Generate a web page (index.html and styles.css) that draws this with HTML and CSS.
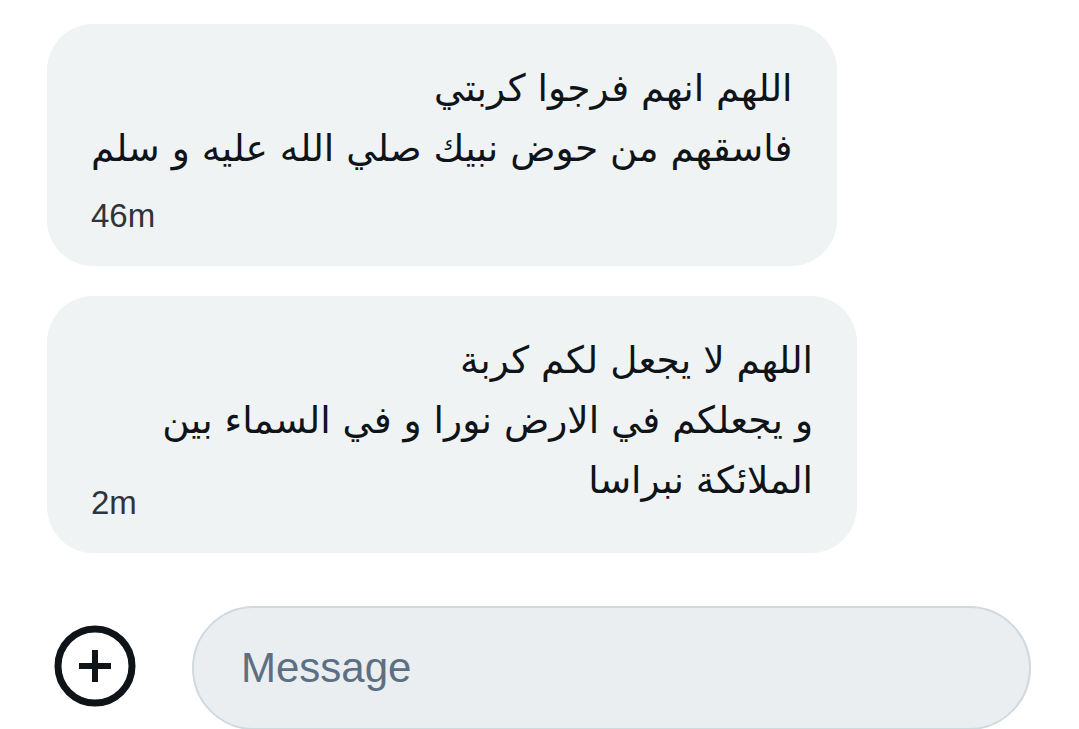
FILE: index.html
```html
<!DOCTYPE html>
<html lang="ar">
<head>
<meta charset="utf-8">
<title>Messages</title>
<link rel="stylesheet" href="styles.css">
</head>
<body>
<main class="chat">
  <section class="thread">
    <div class="bubble">
      <p class="bubble__text" dir="rtl">اللهم انهم فرجوا كربتي<br>فاسقهم من حوض نبيك صلي الله عليه و سلم</p>
      <div class="bubble__time">46m</div>
    </div>
    <div class="bubble">
      <p class="bubble__text" dir="rtl">اللهم لا يجعل لكم كربة<br>و يجعلكم في الارض نورا و في السماء بين الملائكة نبراسا</p>
      <div class="bubble__time bubble__time--overlap">2m</div>
    </div>
  </section>
  <footer class="composer">
    <button class="composer__add" aria-label="Add">
      <svg viewBox="0 0 82 82" width="82" height="82" aria-hidden="true">
        <circle cx="41" cy="41" r="37" fill="none" stroke="#0f1419" stroke-width="7"/>
        <rect x="25" y="38" width="32" height="6" fill="#0f1419"/>
        <rect x="38" y="25" width="6" height="32" fill="#0f1419"/>
      </svg>
    </button>
    <div class="composer__input">Message</div>
  </footer>
</main>
</body>
</html>
```

FILE: styles.css
```css
html, body {
  margin: 0;
  padding: 0;
  background: #ffffff;
}

body {
  width: 1079px;
  height: 729px;
  overflow: hidden;
  font-family: "DejaVu Sans", "Liberation Sans", sans-serif;
  color: #0f1419;
}

.chat {
  display: flex;
  flex-direction: column;
  padding: 24px 0 0 47px;
}

.thread {
  display: flex;
  flex-direction: column;
  align-items: flex-start;
  gap: 30px;
}

.bubble {
  box-sizing: border-box;
  max-width: 810px;
  background: #eff3f4;
  border-radius: 46px;
  padding: 34px 44px 30px 44px;
}

.bubble__text {
  margin: 0;
  font-family: "DejaVu Sans", sans-serif;
  font-size: 37.5px;
  line-height: 60px;
  text-align: right;
  color: #0f1419;
}

.bubble__time {
  font-family: "Liberation Sans", Arial, sans-serif;
  font-size: 33px;
  line-height: 40px;
  color: #2f3439;
  margin-top: 18px;
}

.bubble__time--overlap {
  margin-top: -27px;
}

.composer {
  display: flex;
  align-items: center;
  gap: 56px;
  margin-top: 53px;
  padding-left: 7px;
}

.composer__add {
  display: flex;
  padding: 0;
  border: 0;
  background: none;
  width: 82px;
  height: 82px;
  margin-top: -4px;
}

.composer__input {
  box-sizing: border-box;
  width: 839px;
  height: 124px;
  border: 2px solid #cfd9de;
  border-radius: 62px;
  background: #ebeef0;
  padding-left: 47px;
  display: flex;
  align-items: center;
  font-family: "Liberation Sans", Arial, sans-serif;
  font-size: 42px;
  color: #5b7083;
}
```
